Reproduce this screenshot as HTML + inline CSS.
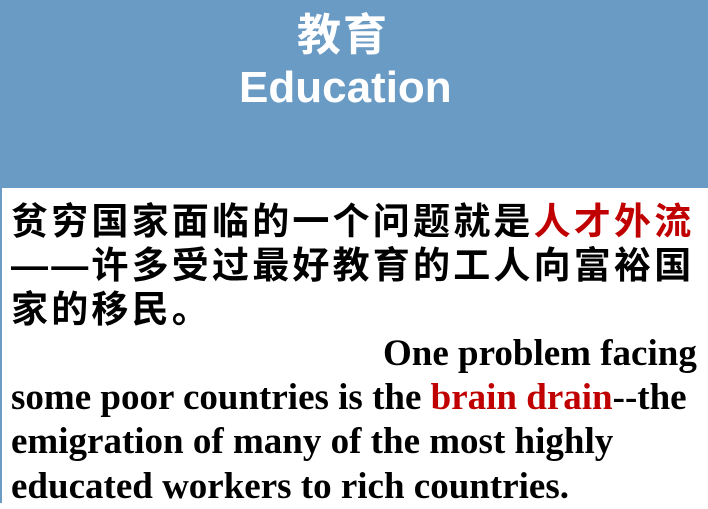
<!DOCTYPE html>
<html><head><meta charset="utf-8"><style>
html,body{margin:0;padding:0;}
body{width:708px;height:503px;overflow:hidden;background:#fff;position:relative;}
#hd{position:absolute;left:0;top:0;width:708px;height:188px;background:#6a9bc4;}
#lb{position:absolute;left:0;top:188px;width:2px;height:315px;background:#6a9bc4;}
.t{position:absolute;color:#fff;font-weight:bold;font-family:"Liberation Sans","Noto Sans CJK SC",sans-serif;white-space:nowrap;}
.cn{position:absolute;left:11px;font-family:"Liberation Sans","Noto Sans CJK SC",sans-serif;font-size:37px;letter-spacing:3.2px;line-height:44px;color:#000;white-space:nowrap;font-weight:bold;}
.en{position:absolute;font-family:"Liberation Serif",serif;font-weight:bold;font-size:37px;line-height:44px;color:#000;white-space:nowrap;}
.r{color:#c00000;}
</style></head><body>
<div id="hd"></div><div id="lb"></div>
<div class="t" style="left:297px;top:10px;font-size:44px;line-height:52px;letter-spacing:2px;">教育</div>
<div class="t" style="left:239px;top:62px;font-size:44px;line-height:52px;">Education</div>
<div class="cn" style="top:200px;">贫穷国家面临的一个问题就是<span class="r">人才外流</span></div>
<div class="cn" style="top:244px;">——许多受过最好教育的工人向富裕国</div>
<div class="cn" style="top:288px;">家的移民。</div>
<div class="en" style="left:383px;top:332px;">One problem facing</div>
<div class="en" style="left:11px;top:376px;">some poor countries is the <span class="r">brain drain</span>--the</div>
<div class="en" style="left:11px;top:420px;">emigration of many of the most highly</div>
<div class="en" style="left:11px;top:465px;">educated workers to rich countries.</div>
</body></html>
